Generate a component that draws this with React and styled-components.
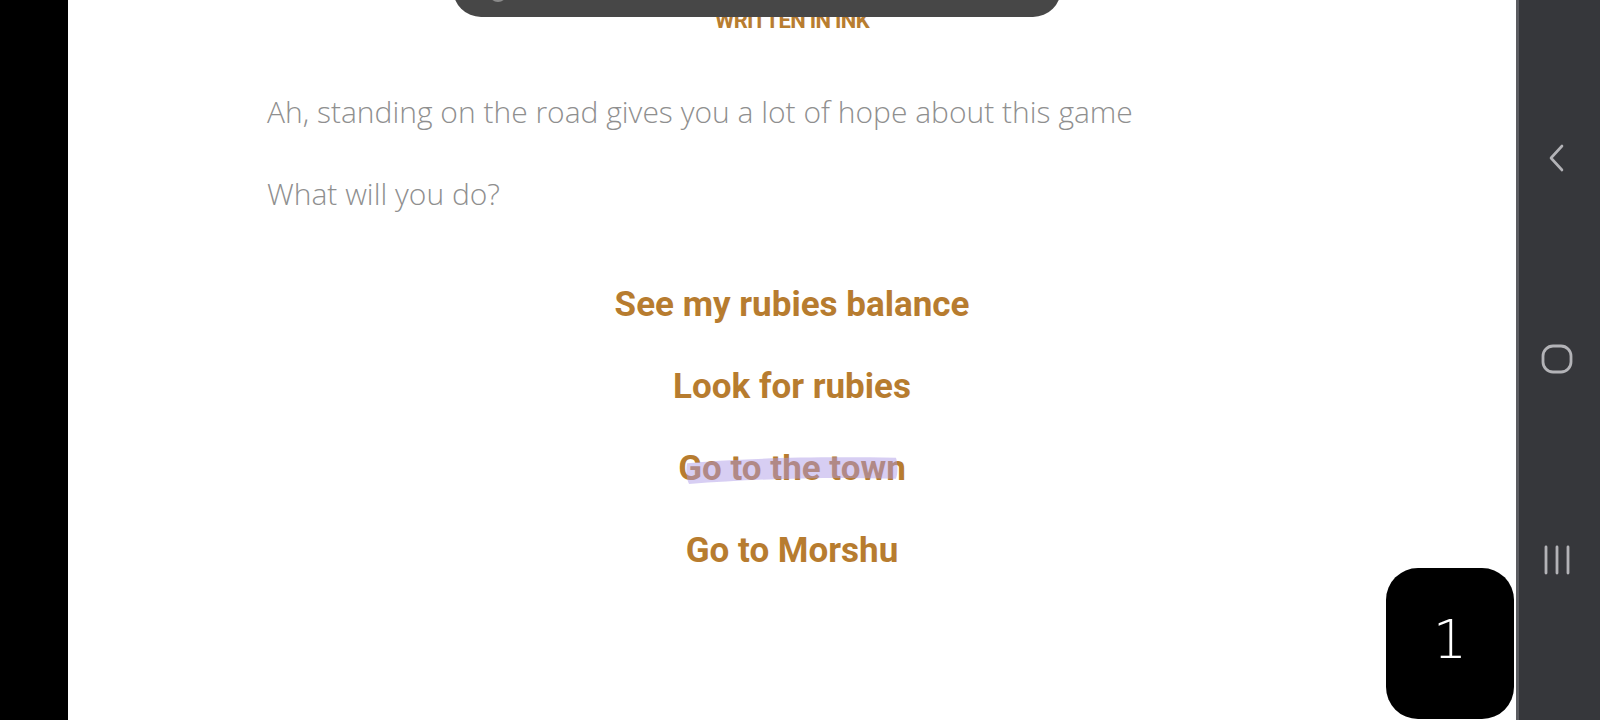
import styled, { createGlobalStyle } from 'styled-components';

const GlobalStyle = createGlobalStyle`
    html, body {
        margin: 0;
        padding: 0;
        background: #000;
    }
    #root {
        height: 720px;
    }
`;

const choices = [
    { label: 'See my rubies balance' },
    { label: 'Look for rubies' },
    { label: 'Go to the town', marked: true },
    { label: 'Go to Morshu' },
];

const Highlight = () => (
    <MarkSvg viewBox="0 0 212 32" preserveAspectRatio="none">
        <path
            d="M2,8 C40,4 110,0 209,2 C211,8 211,20 209,25 C140,23 70,25 4,31 C1,25 1,14 2,8 Z"
            fill="rgba(172,152,230,0.48)"
        />
    </MarkSvg>
);

const App = () => {
    return (
        <Screen>
            <GlobalStyle />
            <Bezel />
            <Page>
                <TopPill>
                    <PillDot />
                </TopPill>
                <Story>
                    <Title>WRITTEN IN INK</Title>
                    <Paragraph>Ah, standing on the road gives you a lot of hope about this game</Paragraph>
                    <Paragraph>What will you do?</Paragraph>
                    <Choices>
                        {choices.map((c) => (
                            <Choice key={c.label}>
                                <ChoiceText>
                                    {c.label}
                                    {c.marked && <Highlight />}
                                </ChoiceText>
                            </Choice>
                        ))}
                    </Choices>
                </Story>
                <Counter>1</Counter>
            </Page>
            <NavBar>
                <NavButton>
                    <svg width="18" height="30" viewBox="0 0 18 30">
                        <path d="M14,3 L3,15 L14,27" fill="none" stroke="#b3b3b7" strokeWidth="2.6" strokeLinecap="round" strokeLinejoin="round" />
                    </svg>
                </NavButton>
                <NavButton>
                    <svg width="32" height="30" viewBox="0 0 32 30">
                        <rect x="2" y="2" width="28" height="26" rx="10" fill="none" stroke="#b3b3b7" strokeWidth="2.8" />
                    </svg>
                </NavButton>
                <NavButton>
                    <svg width="28" height="30" viewBox="0 0 28 30">
                        <path d="M3,2 V28 M14,2 V28 M25,2 V28" stroke="#b3b3b7" strokeWidth="2.8" strokeLinecap="round" />
                    </svg>
                </NavButton>
            </NavBar>
        </Screen>
    );
};

const Screen = styled.div`
    display: flex;
    width: 1600px;
    height: 720px;
    overflow: hidden;
    background: #000;
`;

const Bezel = styled.div`
    width: 68px;
    flex-shrink: 0;
    background: #000;
`;

const Page = styled.div`
    position: relative;
    flex: 1;
    background: #fff;
    overflow: hidden;
`;

const TopPill = styled.div`
    position: absolute;
    top: -40px;
    left: 385px;
    width: 608px;
    height: 57px;
    border-radius: 0 0 28px 28px;
    background: #474747;
    z-index: 2;
`;

const PillDot = styled.div`
    position: absolute;
    left: 36px;
    bottom: 15px;
    width: 14px;
    height: 14px;
    border-radius: 50%;
    border: 2px solid #8a8a8a;
`;

const Story = styled.div`
    display: flex;
    flex-direction: column;
    width: 1050px;
    margin: 0 auto;
    padding-top: 9px;
`;

const Title = styled.h1`
    margin: 0 0 59px;
    text-align: center;
    font-family: Roboto, "Liberation Sans", sans-serif;
    font-weight: 700;
    font-size: 22px;
    line-height: 24px;
    letter-spacing: -0.7px;
    color: #b87d30;
`;

const Paragraph = styled.p`
    margin: 0 0 42px;
    font-family: "Open Sans", "Liberation Sans", sans-serif;
    font-weight: 300;
    font-size: 30px;
    line-height: 40px;
    color: #8f8f8f;
`;

const Choices = styled.div`
    display: flex;
    flex-direction: column;
    align-items: center;
    gap: 38px;
    margin-top: 27px;
`;

const Choice = styled.div`
    font-family: Roboto, "Liberation Sans", sans-serif;
    font-weight: 700;
    font-size: 35px;
    line-height: 44px;
    color: #b77c2f;
`;

const ChoiceText = styled.span`
    position: relative;
    display: inline-block;
`;

const MarkSvg = styled.svg`
    position: absolute;
    left: 3%;
    top: 9px;
    width: 94%;
    height: 29px;
    pointer-events: none;
`;

const Counter = styled.div`
    position: absolute;
    left: 1318px;
    top: 568px;
    width: 128px;
    height: 151px;
    border-radius: 32px;
    background: #000;
    color: #fff;
    display: flex;
    align-items: center;
    justify-content: center;
    font-family: "DejaVu Sans", sans-serif;
    font-weight: 200;
    font-size: 54px;
    padding-bottom: 8px;
    box-sizing: border-box;
`;

const NavBar = styled.div`
    width: 84px;
    flex-shrink: 0;
    background: #36373b;
    border-left: 3px solid #5b5c60;
    box-sizing: border-box;
    display: flex;
    flex-direction: column;
    align-items: center;
    padding: 143px 6px 0 0;
    gap: 171px;
`;

const NavButton = styled.div`
    display: flex;
    align-items: center;
    justify-content: center;
    width: 40px;
    height: 30px;
`;

export default App;
